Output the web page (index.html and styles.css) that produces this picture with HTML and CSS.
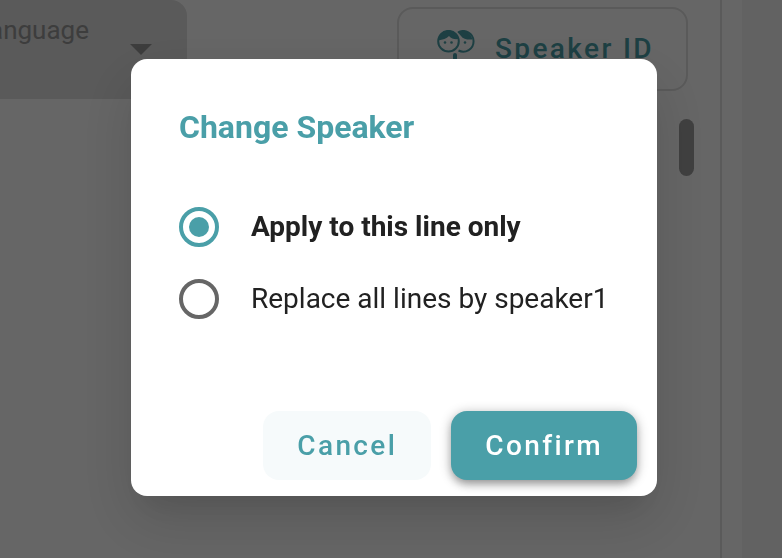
FILE: index.html
```html
<!DOCTYPE html>
<html lang="en">
<head>
<meta charset="utf-8">
<meta name="viewport" content="width=device-width, initial-scale=1">
<title>Change Speaker</title>
<link rel="stylesheet" href="styles.css">
</head>
<body>
<div class="page">
  <main class="panel">
    <div class="toolbar">
      <div class="field">
        <select class="field-select" aria-label="Language">
          <option>Language</option>
        </select>
        <svg class="field-arrow" viewBox="0 0 22 11" aria-hidden="true"><path d="M0 0h22L11 11z"/></svg>
      </div>
      <button type="button" class="btn btn-outline">
        <svg class="faces" viewBox="0 0 38 36" aria-hidden="true">
          <g fill="none" stroke="currentColor" stroke-width="2">
            <path d="M21 2.500A10.300 10.300 0 1 1 21.500 20.500"/>
            <circle cx="11.500" cy="11.200" r="10.300"/>
          </g>
          <g fill="currentColor">
            <path d="M1 10.500C2 4 6 .5 11.500 .5c5 0 8.500 3 10 8.500-4 .5-7-.2-9.500-3C9.500 8.500 6 9.800 1 10.500z"/>
            <path d="M20.500 2C27 -1 34 2.500 35.500 9.500c-5 .5-9.500-.5-11.500-3.500z"/>
            <circle cx="8" cy="12.500" r="1.300"/>
            <circle cx="14.500" cy="12.500" r="1.300"/>
            <circle cx="28" cy="12.500" r="1.300"/>
            <rect x="16" y="23" width="4" height="13" rx="2"/>
          </g>
        </svg>
        <span>Speaker ID</span>
      </button>
    </div>
    <div class="scroll-thumb"></div>
  </main>
  <aside class="gutter"></aside>
</div>

<div class="overlay">
  <form class="dialog" role="dialog" aria-modal="true" aria-labelledby="dialog-title">
    <h2 class="dialog-title" id="dialog-title">Change Speaker</h2>
    <div class="options">
      <label class="option"><input type="radio" name="scope" checked><span>Apply to this line only</span></label>
      <label class="option"><input type="radio" name="scope"><span>Replace all lines by speaker1</span></label>
    </div>
    <div class="actions">
      <button type="button" class="btn btn-soft">Cancel</button>
      <button type="button" class="btn btn-solid">Confirm</button>
    </div>
  </form>
</div>
</body>
</html>
```
FILE: styles.css
```css
:root {
  --teal: #4a9fa8;
  --ink: #212121;
}

* { box-sizing: border-box; }

body {
  margin: 0;
  font-family: Roboto, "Liberation Sans", sans-serif;
  font-size: 28px;
  color: var(--ink);
  overflow: hidden;
}

.page {
  display: flex;
  min-height: 100vh;
  background: #fff;
}

.panel {
  flex: 1;
  border-right: 2px solid #e1e1e1;
}

.gutter {
  width: 40px;
  margin-left: 20px;
  background: #f5f5f5;
}

.toolbar {
  display: flex;
  justify-content: space-between;
  align-items: flex-start;
  padding-right: 32px;
}

.field {
  display: flex;
  align-items: center;
  width: 220px;
  height: 99px;
  margin-left: -33px;
  padding-right: 35px;
  border-radius: 0 16px 0 0;
  background: #e0e0e0;
}

.field-select {
  flex: 1;
  min-width: 0;
  height: 60px;
  margin-bottom: 40px;
  padding: 0 0 0 8px;
  border: 0;
  background: none;
  appearance: none;
  font: inherit;
  font-size: 26px;
  color: #999;
}

.field-arrow {
  width: 22px;
  height: 11px;
  fill: #999;
}

.btn {
  display: inline-flex;
  align-items: center;
  justify-content: center;
  height: 69px;
  padding: 0 34px;
  border: 0;
  border-radius: 16px;
  font: inherit;
  font-weight: 500;
  letter-spacing: 0.085em;
  color: var(--teal);
}

.btn-outline {
  gap: 20px;
  height: 84px;
  margin-top: 7px;
  padding: 0 32px 2px 38px;
  border: 2px solid #e1e1e1;
  background: none;
}

.btn-soft { background: #f6fafb; }

.btn-solid {
  background: var(--teal);
  color: #fff;
  box-shadow: 0 6px 8px -2px rgba(0, 0, 0, .24), 0 2px 12px rgba(0, 0, 0, .3);
}

.faces {
  width: 38px;
  height: 36px;
}

.scroll-thumb {
  width: 15px;
  height: 57px;
  margin: 20px 26px 0 auto;
  border-radius: 8px;
  background: #a0a0a0;
}

.overlay {
  position: fixed;
  inset: 0;
  display: flex;
  align-items: flex-start;
  padding: 59px 125px 0 131px;
  background: rgba(0, 0, 0, .6);
}

.dialog {
  flex: 1;
  padding: 48px 20px 16px 48px;
  border-radius: 16px;
  background: #fff;
  box-shadow: 0 22px 30px -14px rgba(0, 0, 0, .1), 0 24px 60px 6px rgba(0, 0, 0, .12);
}

.dialog-title {
  margin: 0;
  font-size: 32px;
  line-height: 40px;
  font-weight: 700;
  color: var(--teal);
}

.options {
  display: grid;
  gap: 32px;
  margin-top: 60px;
}

.option {
  display: flex;
  align-items: center;
  gap: 32px;
  line-height: 40px;
  white-space: nowrap;
}

.option:has(input:checked) { font-weight: 700; }

.option input {
  flex: none;
  width: 40px;
  height: 40px;
  margin: 0;
  border: 4px solid #666;
  border-radius: 50%;
  appearance: none;
}

.option input:checked {
  padding: 6px;
  border-color: var(--teal);
  background: var(--teal) content-box;
}

.actions {
  display: flex;
  justify-content: flex-end;
  gap: 20px;
  margin-top: 92px;
}
```
